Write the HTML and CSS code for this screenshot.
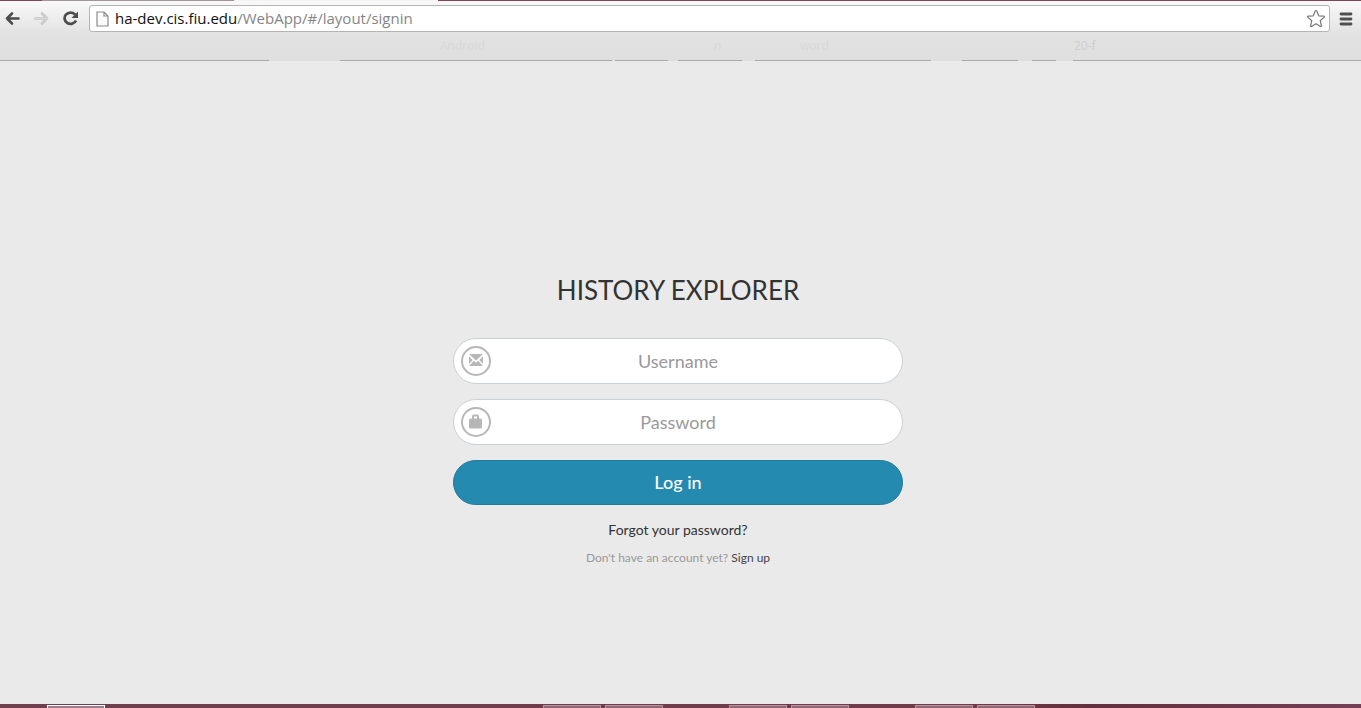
FILE: index.html
```html
<!DOCTYPE html>
<html lang="en">
<head>
<meta charset="utf-8">
<title>History Explorer</title>
<link rel="stylesheet" href="styles.css">
</head>
<body>
<header class="browser">
  <div class="tabstrip"></div>
  <div class="toolbar">
    <button class="nav back" aria-label="Back"><svg width="18" height="16" viewBox="0 0 18 16"><path d="M14.500 7.500H3M8 2.500l-5 5 5 5" fill="none" stroke="#4c4c4c" stroke-width="2.600" stroke-linecap="round" stroke-linejoin="round"/></svg></button>
    <button class="nav forward" aria-label="Forward"><svg width="18" height="16" viewBox="0 0 18 16"><path d="M2.500 7.500H14M9 2.500l5 5-5 5" fill="none" stroke="#c4c4c4" stroke-width="2.600" stroke-linecap="round" stroke-linejoin="round"/><path d="M2.500 7.500H14M9 2.500l5 5-5 5" fill="none" stroke="#dadada" stroke-width="1" stroke-linecap="round" stroke-linejoin="round"/></svg></button>
    <button class="nav reload" aria-label="Reload"><svg width="18" height="16" viewBox="0 0 18 16"><path d="M14 9.500a6 5.600 0 1 1-1-6" fill="none" stroke="#4c4c4c" stroke-width="2.800"/><path d="M16 .5v6.500H9.500z" fill="#4c4c4c"/></svg></button>
    <div class="address">
      <svg class="doc" width="13" height="16" viewBox="0 0 13 16"><path d="M1 1h7l4 4v10H1zM8 1v4h4" fill="#fafafa" stroke="#8c8c8c" stroke-width="1.200"/></svg>
      <span class="url"><span class="host">ha-dev.cis.fiu.edu</span>/WebApp/#/layout/signin</span>
      <button class="nav star" aria-label="Bookmark"><svg width="20" height="20" viewBox="0 0 20 20"><path d="M10 1.500q.6 0 .9.700l1.800 4.700 5 .3q1.200.2.300 1.200l-3.800 3.300 1.200 5q.1 1.200-.9.700L10 14.700l-4.500 2.700q-1 .5-.9-.7l1.200-5L2 8.400q-.9-1 .3-1.200l5-.3 1.800-4.700q.3-.7.9-.7z" fill="#fff" stroke="#777" stroke-width="1.200" stroke-linejoin="round"/></svg></button>
    </div>
    <button class="nav menu" aria-label="Menu"><svg width="14" height="14" viewBox="0 0 14 14"><path d="M2 2h10M2 7h10M2 12h10" stroke="#505050" stroke-width="2.800" stroke-linecap="round"/></svg></button>
  </div>
  <div class="bookmarks"><span>Android</span><span>n</span><span>word</span><span class="last">20-f</span></div>
  <div class="edge"></div>
</header>
<main class="page">
  <form class="signin">
    <h1 class="title">HISTORY EXPLORER</h1>
    <label class="field">
      <span class="badge"><svg width="16" height="16" viewBox="0 0 16 16"><path d="M1 1h14L8 7.500z" fill="#b7b7b7"/><path d="M1 3.500l3.800 3.500L1 11zM15 3.500v7.500l-3.800-4zM1 13l4.800-5.200L8 9.800l2.200-2L15 13z" fill="#b7b7b7"/></svg></span>
      <input type="text" placeholder="Username" aria-label="Username">
    </label>
    <label class="field">
      <span class="badge"><svg width="16" height="16" viewBox="0 0 16 16"><path d="M5 5V2.500q0-1 1-1h3q1 0 1 1V5" fill="none" stroke="#b7b7b7" stroke-width="2"/><rect x="1" y="4.500" width="13" height="10" rx="1.500" fill="#b7b7b7"/></svg></span>
      <input type="password" placeholder="Password" aria-label="Password">
    </label>
    <button class="login" type="button">Log in</button>
    <a class="forgot" href="#">Forgot your password?</a>
    <p class="signup">Don't have an account yet? <a href="#">Sign up</a></p>
  </form>
</main>
<footer class="taskbar">
  <span class="task active"></span><span class="task second"></span><span class="task"></span><span class="task spaced"></span><span class="task"></span><span class="task spaced"></span><span class="task"></span>
</footer>
</body>
</html>
```
FILE: styles.css
```css
* { box-sizing: border-box; }
body {
  margin: 0;
  min-height: 100vh;
  display: flex;
  flex-direction: column;
  background: #eaeaea;
  font-family: Lato, sans-serif;
}
.browser { background: linear-gradient(#fafafa, #e2e2e2 34px, #dfdfdf); }
.tabstrip {
  height: 1px;
  background: linear-gradient(90deg, #854452 42px, #a39499 42px, #a39499 234px, #f4f4f4 234px, #f4f4f4 438px, #854452 438px);
}
.toolbar {
  display: flex;
  align-items: center;
  padding: 4px 8px 0 4px;
}
.nav {
  display: flex;
  padding: 0;
  border: 0;
  background: none;
}
.forward { margin-left: 11px; }
.reload { margin-left: 11px; }
.address {
  flex: 1;
  display: flex;
  align-items: center;
  height: 27px;
  margin: 0 9px 0 9px;
  padding: 0 3px 0 6px;
  border: 1px solid #b4b4b4;
  border-radius: 3px;
  background: #fff;
}
.url {
  flex: 1;
  margin-left: 6px;
  padding-bottom: 2px;
  font: 15px/20px "Open Sans", sans-serif;
  color: #858585;
}
.host { color: #111; }
.bookmarks {
  display: flex;
  height: 28px;
  padding-left: 440px;
  font: 12px/28px "Open Sans", sans-serif;
  color: #d8d8d8;
}
.bookmarks span { flex: 0 0 180px; }
.bookmarks .last { margin-left: 94px; color: #cdcdcd; }
.bookmarks span:nth-child(2) { flex-basis: 86px; margin-left: 94px; }
.edge {
  height: 1px;
  background: linear-gradient(90deg, #a9a9a9 269px, #dedede 269px, #dedede 340px, #a9a9a9 340px, #a9a9a9 612px, #dedede 612px, #dedede 615px, #a9a9a9 615px, #a9a9a9 668px, #dedede 668px, #dedede 678px, #a9a9a9 678px, #a9a9a9 742px, #dedede 742px, #dedede 755px, #a9a9a9 755px, #a9a9a9 931px, #dedede 931px, #dedede 962px, #a9a9a9 962px, #a9a9a9 1018px, #dedede 1018px, #dedede 1032px, #a9a9a9 1032px, #a9a9a9 1056px, #dedede 1056px, #dedede 1073px, #a9a9a9 1073px);
}
.page {
  flex: 1;
  display: flex;
  justify-content: center;
  align-items: center;
  padding: 0 5px 0 0;
}
.signin {
  display: flex;
  flex-direction: column;
  align-items: stretch;
  width: 450px;
  max-width: 100%;
  padding-top: 76px;
}
.title {
  margin: 0 0 32px;
  font-size: 26px;
  line-height: 32px;
  font-weight: 400;
  text-align: center;
  color: #333;
}
.field {
  position: relative;
  display: block;
  margin-bottom: 15px;
}
.field input {
  display: block;
  width: 100%;
  height: 46px;
  padding: 0 40px;
  border: 1px solid #cbd0d4;
  border-radius: 23px;
  outline: 0;
  background: #fff;
  font: 18px/24px Lato, sans-serif;
  text-align: center;
}
.field input::placeholder { color: #999; opacity: 1; }
.badge {
  position: absolute;
  left: 8px;
  top: 8px;
  display: flex;
  align-items: center;
  justify-content: center;
  width: 30px;
  height: 30px;
  border: 2px solid #b7b7b7;
  border-radius: 50%;
}
.login {
  height: 45px;
  border: 1px solid #237b9c;
  border-radius: 23px;
  background: #248ab0;
  font: 500 18px/24px Lato, sans-serif;
  color: #fff;
}
.forgot {
  margin-top: 15px;
  font-size: 14px;
  line-height: 20px;
  text-align: center;
  text-decoration: none;
  color: #333;
}
.signup {
  margin: 8px 0 0;
  font-size: 12px;
  line-height: 20px;
  text-align: center;
  color: #999;
}
.signup a { color: #444; text-decoration: none; }
.taskbar {
  display: flex;
  height: 4px;
  padding: 1px 0 0 47px;
  background: linear-gradient(90deg, #70404f, #713b4a 70%, #652f3e 80%, #754056);
}
.task {
  width: 58px;
  margin-right: 4px;
  border: 1px solid #b893a0;
  border-bottom: 0;
  background: #916675;
}
.task.active { border-color: #fff; background: #a17d8c; }
.task.second { margin-left: 434px; }
.task.spaced { margin-left: 62px; }
```
